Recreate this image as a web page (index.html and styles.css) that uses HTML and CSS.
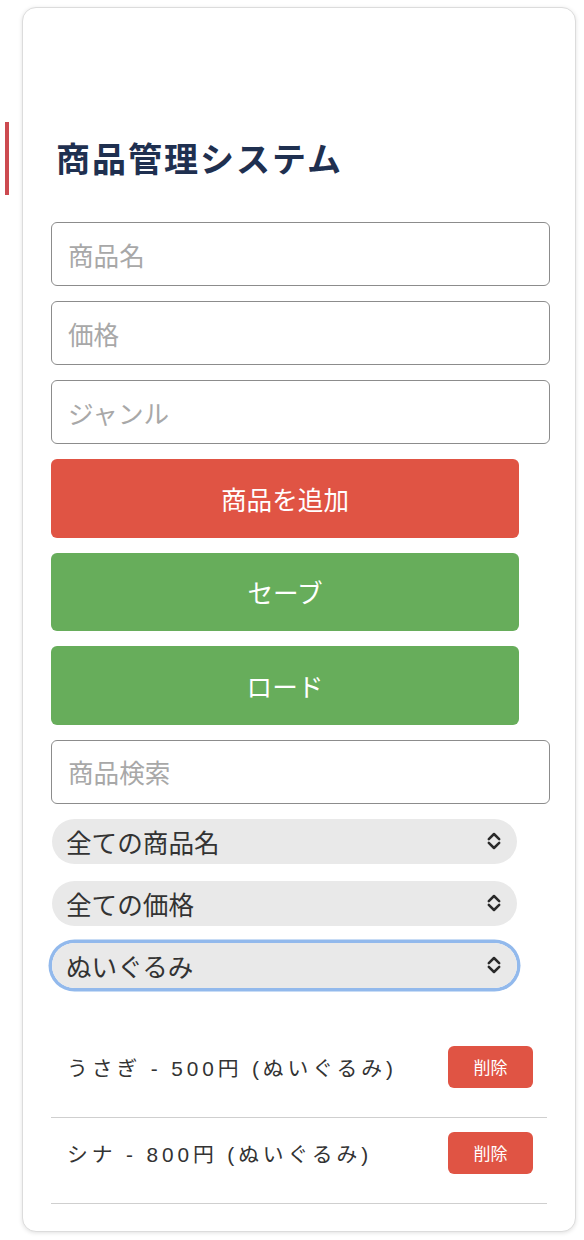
FILE: index.html
```html
<!DOCTYPE html>
<html lang="ja">
<head>
<meta charset="utf-8">
<title>商品管理システム</title>
<link rel="stylesheet" href="styles.css">
</head>
<body>
<div class="page">
  <span class="accent"></span>
  <div class="card">
    <h1 class="title">商品管理システム</h1>
    <div class="form">
      <input class="field" type="text" placeholder="商品名">
      <input class="field" type="text" placeholder="価格">
      <input class="field" type="text" placeholder="ジャンル">
      <button class="btn btn-red">商品を追加</button>
      <button class="btn btn-green">セーブ</button>
      <button class="btn btn-green">ロード</button>
      <input class="field field-search" type="text" placeholder="商品検索">
      <div class="select-wrap">
        <select class="select"><option>全ての商品名</option></select>
        <svg class="chev" viewBox="0 0 14 20" width="14" height="20"><path d="M1.8 8.2 L7 3 L12.2 8.2 M1.8 11.8 L7 17 L12.2 11.8" fill="none" stroke="#2a2a2a" stroke-width="2.5" stroke-linecap="round" stroke-linejoin="round"/></svg>
      </div>
      <div class="select-wrap">
        <select class="select"><option>全ての価格</option></select>
        <svg class="chev" viewBox="0 0 14 20" width="14" height="20"><path d="M1.8 8.2 L7 3 L12.2 8.2 M1.8 11.8 L7 17 L12.2 11.8" fill="none" stroke="#2a2a2a" stroke-width="2.5" stroke-linecap="round" stroke-linejoin="round"/></svg>
      </div>
      <div class="select-wrap focused">
        <select class="select"><option>ぬいぐるみ</option></select>
        <svg class="chev" viewBox="0 0 14 20" width="14" height="20"><path d="M1.8 8.2 L7 3 L12.2 8.2 M1.8 11.8 L7 17 L12.2 11.8" fill="none" stroke="#2a2a2a" stroke-width="2.5" stroke-linecap="round" stroke-linejoin="round"/></svg>
      </div>
    </div>
    <ul class="list">
      <li class="item"><span class="item-text">うさぎ - 500円 (ぬいぐるみ)</span><button class="del">削除</button></li>
      <li class="item"><span class="item-text">シナ - 800円 (ぬいぐるみ)</span><button class="del">削除</button></li>
    </ul>
  </div>
</div>
</body>
</html>
```

FILE: styles.css
```css
* { box-sizing: border-box; }
html, body { margin: 0; padding: 0; background: #ffffff; }
body {
  font-family: "Liberation Sans", "Noto Sans CJK JP", sans-serif;
  color: #333;
}
.page {
  position: relative;
  padding: 7px 8px 9px 22px;
}
.accent {
  position: absolute;
  left: 5px;
  top: 122px;
  width: 4px;
  height: 73px;
  background: #cc4a50;
}
.card {
  border: 1px solid #dcdcdc;
  border-radius: 14px;
  box-shadow: 0 1px 4px rgba(0,0,0,0.12);
  padding: 29px 28px 27px 28px;
  background: #fff;
}
.title {
  margin: 98px 0 41px 5px;
  font-family: "Noto Sans CJK JP", sans-serif;
  font-weight: 700;
  font-size: 34px;
  line-height: 46px;
  letter-spacing: 2px;
  color: #1f3050;
}
.form {
  display: flex;
  flex-direction: column;
  align-items: flex-start;
}
.field {
  width: 499px;
  height: 64px;
  border: 1.5px solid #8c8c8c;
  border-radius: 6px;
  padding: 0 16px;
  font-family: "Noto Sans CJK JP", sans-serif;
  font-size: 25.6px;
  color: #333;
  margin-bottom: 15px;
  background: #fff;
  outline: none;
}
.field-search { margin-bottom: 15px; }
.field::placeholder { color: #a8a8a8; }
.btn {
  width: 468px;
  height: 78.5px;
  border: none;
  border-radius: 6px;
  color: #fff;
  font-family: "Noto Sans CJK JP", sans-serif;
  font-size: 25.6px;
  margin-bottom: 15px;
  padding: 0;
}
.btn-red { background: #e05444; }
.btn-green { background: #67ad5b; }
.select-wrap {
  position: relative;
  width: 465px;
  height: 45px;
  margin-left: 1px;
  margin-bottom: 17px;
  border-radius: 23px;
}
.select-wrap.focused {
  box-shadow: 0 0 0 3.5px #92b9ec;
}
.select {
  -webkit-appearance: none;
  appearance: none;
  width: 100%;
  height: 100%;
  border: none;
  border-radius: 23px;
  background: #e9e9e9;
  padding: 0 40px 0 14px;
  font-family: "Noto Sans CJK JP", sans-serif;
  font-size: 25.6px;
  color: #333;
  outline: none;
}
.chev {
  position: absolute;
  right: 16px;
  top: 12.5px;
  pointer-events: none;
}
.list {
  list-style: none;
  margin: 27px 0 0 0;
  padding: 0;
}
.item {
  display: flex;
  align-items: center;
  justify-content: space-between;
  padding: 14px 14px 29px 16px;
  border-bottom: 1px solid #cfcfcf;
}
.item-text {
  font-size: 20.8px;
  letter-spacing: 3.9px;
  color: #333;
}
.del {
  width: 85px;
  height: 42px;
  border: none;
  border-radius: 6px;
  background: #e05444;
  color: #fff;
  font-family: "Noto Sans CJK JP", sans-serif;
  font-size: 17px;
  padding: 0;
}
```
